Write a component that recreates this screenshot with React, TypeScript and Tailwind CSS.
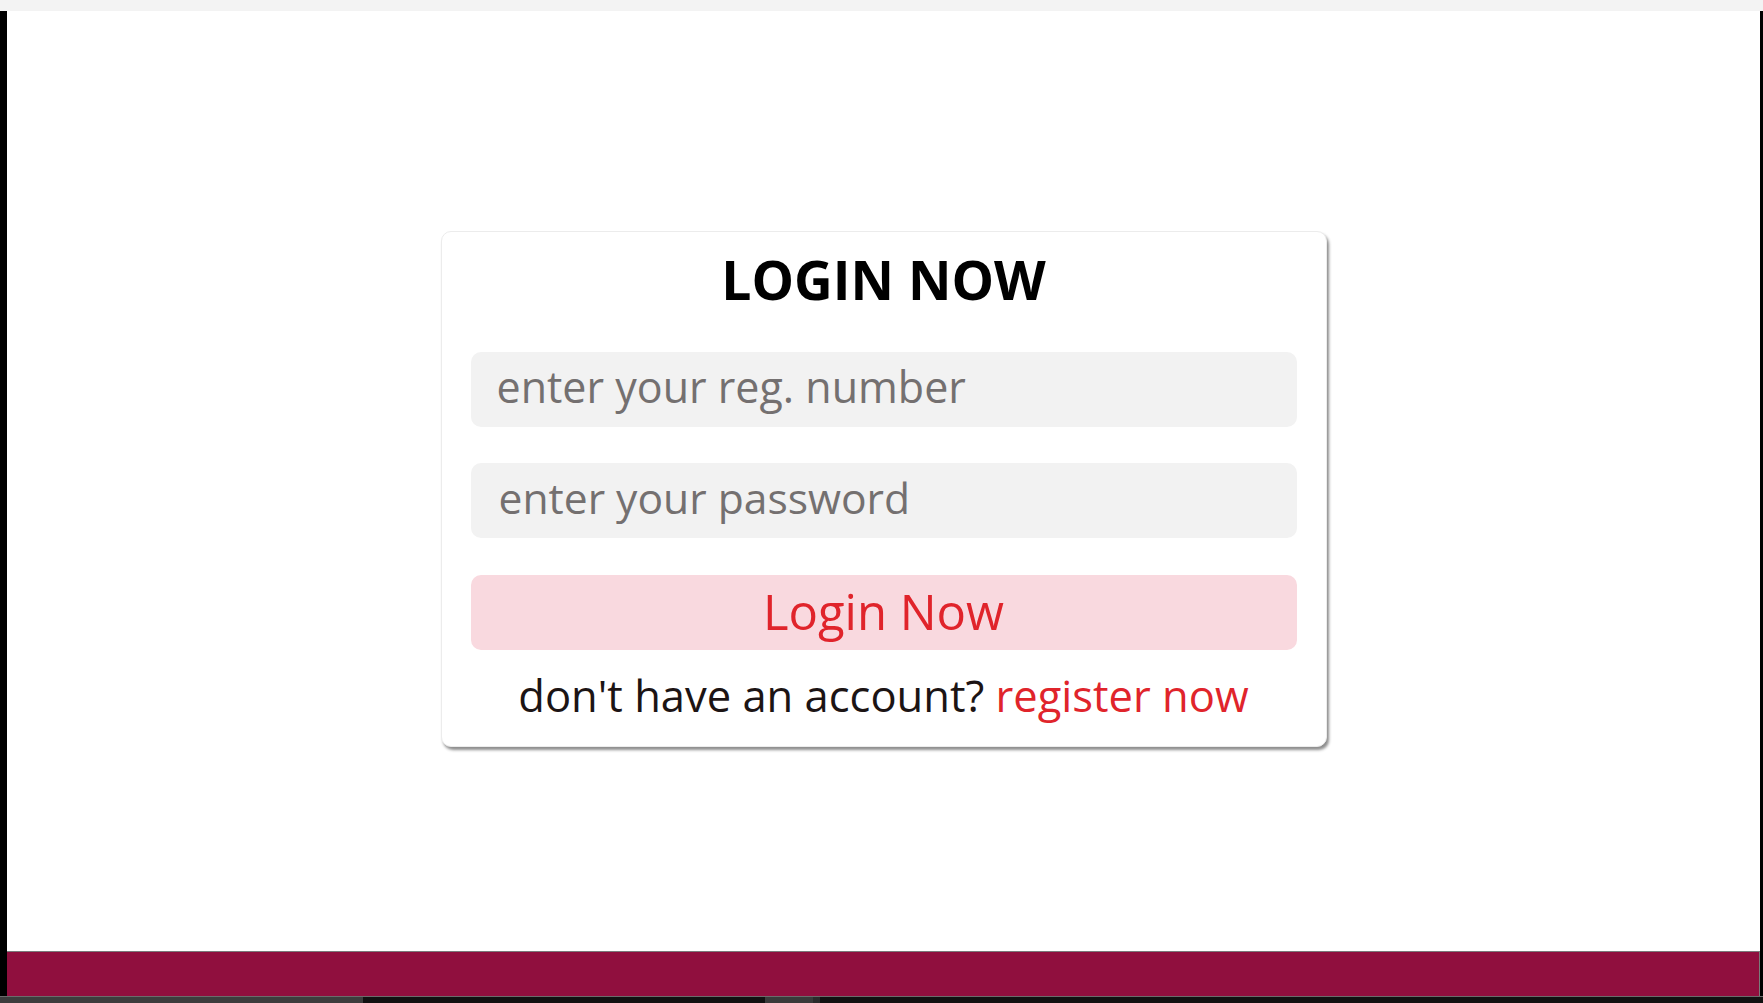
export default function App() {
  return (
    <div className="h-screen flex flex-col bg-white font-['Open_Sans',sans-serif] overflow-hidden">
      <div className="h-[11px] bg-[#f3f3f3] shrink-0"></div>
      <div className="flex-1 flex min-h-0">
        <div className="w-[7px] bg-black shrink-0"></div>
        <div className="flex-1 flex flex-col min-w-0">
          <main className="flex-1 flex items-center justify-center pt-4">
            <form className="w-[886px] bg-white border border-[#ececec] rounded-[10px] px-[29px] pt-[18px] pb-[20px] shadow-[2px_3px_3px_rgba(0,0,0,0.45)] text-center">
              <h3 className="text-[53.5px] leading-[60px] font-bold text-black">LOGIN NOW</h3>
              <input
                type="text"
                placeholder="enter your reg. number"
                className="mt-[42px] block w-full h-[75px] rounded-[10px] bg-[#f2f2f2] pl-[26px] pr-[26px] pb-[7px] text-[43px] text-black placeholder:text-[#747070] outline-none"
              />
              <input
                type="password"
                placeholder="enter your password"
                className="mt-[36px] block w-full h-[75px] rounded-[10px] bg-[#f2f2f2] pl-[28px] pr-[28px] pb-[7px] text-[42.6px] text-black placeholder:text-[#747070] outline-none"
              />
              <button
                type="button"
                className="mt-[37px] block w-full h-[75px] rounded-[10px] bg-[#f9d9df] pb-[12px] text-[49px] text-[#e0242b]"
              >
                Login Now
              </button>
              <p className="mt-[16px] text-[43.5px] leading-[60px] text-[#1c1414]">
                don't have an account? <a className="text-[#e0242b]">register now</a>
              </p>
            </form>
          </main>
          <footer className="h-[45px] shrink-0 bg-[#900f3e] border-t border-r border-[#7a7a7a]"></footer>
        </div>
        <div className="w-[3px] bg-black shrink-0"></div>
      </div>
      <div className="h-[7px] shrink-0 flex flex-col">
        <div className="h-px bg-[#6b6b6b]"></div>
        <div className="flex-1 flex bg-[#111111]">
          <div className="w-[363px] bg-[#3d3d3d]"></div>
          <div className="w-[402px]"></div>
          <div className="w-[48px] bg-[#3a3a3a]"></div>
          <div className="w-[7px] bg-[#2b2b2b]"></div>
        </div>
      </div>
    </div>
  );
}
